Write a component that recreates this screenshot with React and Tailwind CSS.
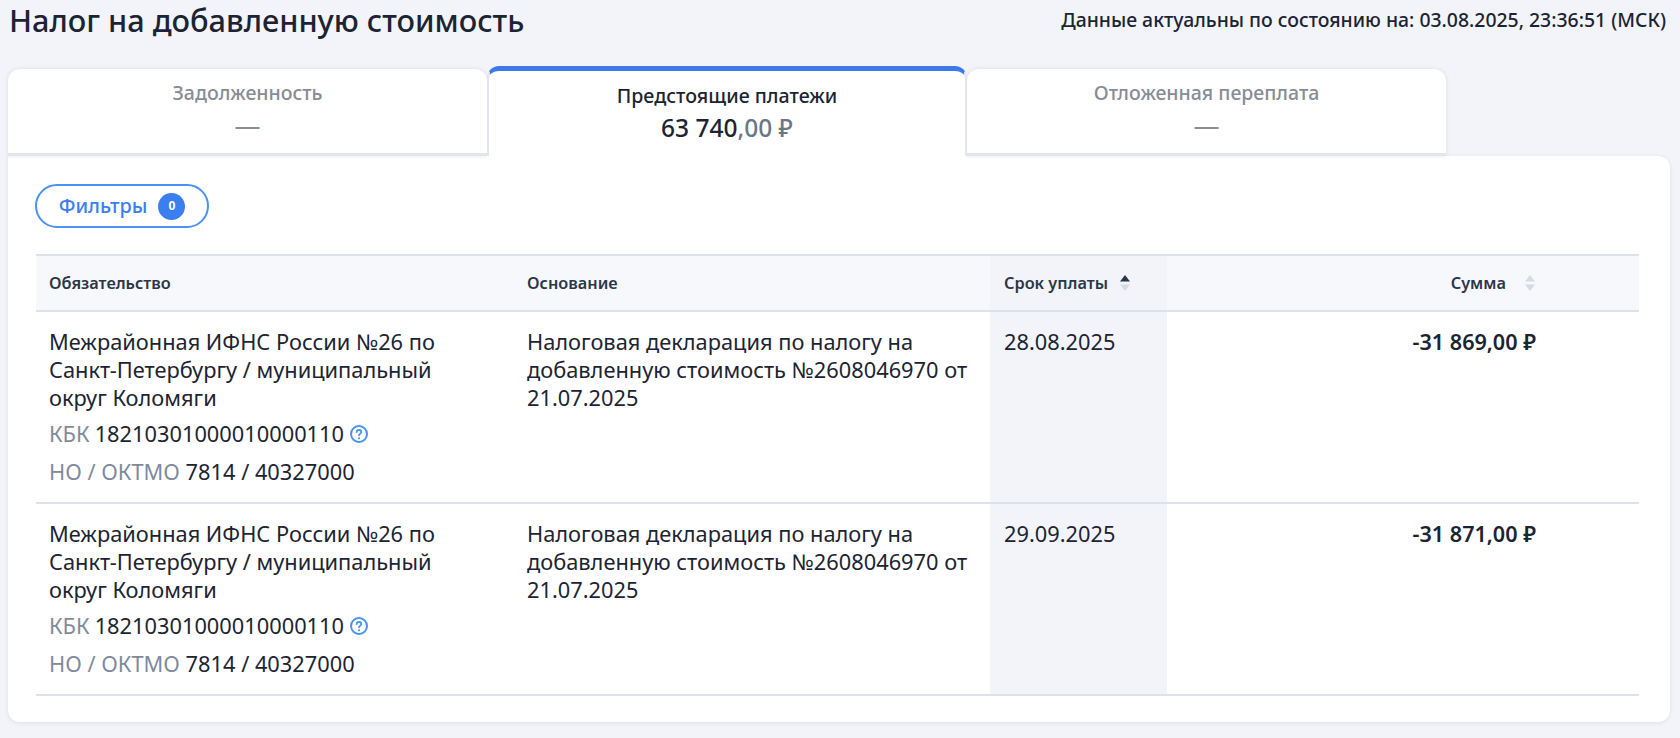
import { Fragment } from "react";

const rows = [
  { date: "28.08.2025", sum: "-31 869,00 ₽" },
  { date: "29.09.2025", sum: "-31 871,00 ₽" },
];

function SortIcon({ active }) {
  return (
    <svg
      width="12"
      height="20"
      viewBox="0 0 12 20"
      className={active ? "ml-[11px] shrink-0" : "ml-[18px] shrink-0"}
    >
      <path d="M6 2 L11 8.5 H1 Z" fill={active ? "#2b3648" : "#d5dae4"} />
      <path d="M6 18 L1 11.5 H11 Z" fill="#d5dae4" />
    </svg>
  );
}

function HelpIcon() {
  return (
    <svg width="20" height="20" viewBox="0 0 20 20" className="ml-[5px] shrink-0" fill="none">
      <circle cx="10" cy="10" r="8" stroke="#4a90f5" strokeWidth="2" />
      <path
        d="M7.7 8.1c0-1.3 1-2.1 2.3-2.1s2.3.8 2.3 2c0 1.8-2.3 1.9-2.3 3.3"
        stroke="#4a90f5"
        strokeWidth="1.8"
        strokeLinecap="round"
      />
      <circle cx="10" cy="14.3" r="1.1" fill="#4a90f5" />
    </svg>
  );
}

function Tab({ title }) {
  return (
    <div className="flex h-[87px] w-[479px] flex-col items-center rounded-t-xl border-b-[3px] border-[#e2e5ec] bg-white pt-[10px] shadow-[0_0_4px_rgba(40,50,80,0.12)]">
      <div className="text-[19.5px] leading-[27px] font-medium text-[#878c96]">{title}</div>
      <div className="mt-[4px] text-[26px] leading-[30px] text-[#878c96]">—</div>
    </div>
  );
}

export default function App() {
  return (
    <div className="h-[738px] overflow-hidden bg-[#f3f4f9] pr-[10px] pl-[8px] font-['Noto_Sans',sans-serif] text-[#1c2433]">
      <div className="flex h-[44px] items-start justify-between">
        <h1 className="pl-px text-[30.7px] leading-[41px] font-medium">
          Налог на добавленную стоимость
        </h1>
        <div className="pt-[8px] pr-[4px] text-[19.4px] leading-[24px] font-medium">
          Данные актуальны по состоянию на: 03.08.2025, 23:36:51 (МСК)
        </div>
      </div>

      <div className="mt-[22px] flex items-end">
        <Tab title="Задолженность" />
        <div className="z-10 flex h-[90px] w-[480px] flex-col items-center rounded-t-xl border-x-2 border-t-[5px] border-x-[#e2e5ec] border-t-[#3b7ae8] bg-white pt-[11px]">
          <div className="text-[19.6px] leading-[27px] font-medium">Предстоящие платежи</div>
          <div className="mt-[3px] text-[24.5px] leading-[32px] font-medium">
            63 740<span className="text-[#6b7688]">,00 ₽</span>
          </div>
        </div>
        <Tab title="Отложенная переплата" />
      </div>

      <div className="h-[566px] rounded-b-xl rounded-tr-xl bg-white pt-[28px] pr-[31px] pl-[28px] shadow-[0_1px_4px_rgba(40,50,80,0.1)]">
        <button className="-ml-px flex h-[44px] w-[174px] items-center justify-center gap-[11px] rounded-full border-2 border-[#4a90f5] text-[19.9px] font-medium text-[#3b7ef0]">
          Фильтры
          <span className="flex h-[27px] w-[27px] items-center justify-center rounded-full bg-[#3b7ef0] text-[12px] font-bold text-white">
            0
          </span>
        </button>

        <table className="mt-[26px] w-full table-fixed border-collapse">
          <colgroup>
            <col className="w-[477px]" />
            <col className="w-[477px]" />
            <col className="w-[177px]" />
            <col />
          </colgroup>
          <thead>
            <tr className="h-[56px] border-y-2 border-[#dde1ea] bg-[#f7f8fb] text-left text-[16.3px] font-semibold text-[#2b3648]">
              <th className="pr-[14px] pl-[13px] font-semibold">Обязательство</th>
              <th className="px-[14px] font-semibold">Основание</th>
              <th className="bg-[#f3f4f9] px-[14px] font-semibold">
                <div className="flex items-center">
                  Срок уплаты
                  <SortIcon active />
                </div>
              </th>
              <th className="pr-[103px] font-semibold">
                <div className="flex items-center justify-end">
                  Сумма
                  <SortIcon />
                </div>
              </th>
            </tr>
          </thead>
          <tbody className="text-[21.8px] leading-[27.8px]">
            {rows.map((row) => (
              <Fragment key={row.date}>
                <tr className="h-[192px] border-b-2 border-[#dde1ea] align-top">
                  <td className="pt-[16px] pr-[24px] pl-[13px]">
                    Межрайонная ИФНС России №26 по Санкт-Петербургу / муниципальный округ Коломяги
                    <div className="mt-[9px] flex items-center">
                      <span className="mr-[5px] text-[#7f8a9c]">КБК</span>
                      18210301000010000110
                      <HelpIcon />
                    </div>
                    <div className="mt-[10px]">
                      <span className="text-[#7f8a9c]">НО / ОКТМО</span> 7814 / 40327000
                    </div>
                  </td>
                  <td className="px-[14px] pt-[16px]">
                    Налоговая декларация по налогу на добавленную стоимость №2608046970 от 21.07.2025
                  </td>
                  <td className="bg-[#f3f4f9] px-[14px] pt-[16px]">{row.date}</td>
                  <td className="pt-[16px] pr-[103px] text-right text-[21.6px] font-semibold">{row.sum}</td>
                </tr>
              </Fragment>
            ))}
          </tbody>
        </table>
      </div>
    </div>
  );
}
